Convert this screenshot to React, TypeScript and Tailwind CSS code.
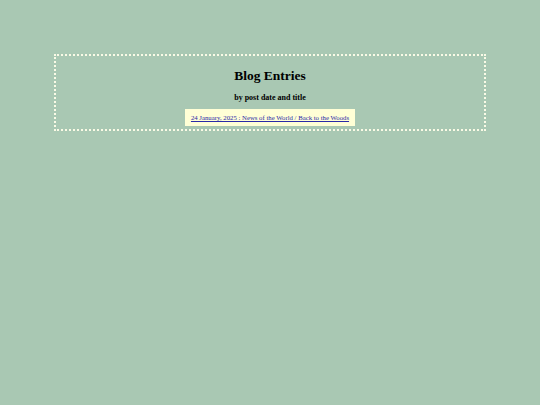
export default function App() {
  return (
    <div
      className="min-h-[405px] w-full bg-[#a9c8b3] pt-[54px]"
      style={{ fontFamily: '"Liberation Serif", "Times New Roman", serif' }}
    >
      <div className="mx-[54px] border-2 border-dotted border-[#fafae6] pt-[12px] pb-[3px] text-center text-black">
        <h1 className="text-[13.5px] font-bold leading-[16px]">Blog Entries</h1>
        <h2 className="mt-[9px] text-[8px] font-bold leading-[10px]">by post date and title</h2>
        <div className="mt-[6px] flex justify-center">
          <div className="bg-[#ffffd6] px-[6px] py-[4px] text-[6.75px] leading-[9px]">
            <a href="#" className="text-[#2a2aa8] underline">
              24 January, 2025 : News of the World / Back to the Woods
            </a>
          </div>
        </div>
      </div>
    </div>
  );
}
